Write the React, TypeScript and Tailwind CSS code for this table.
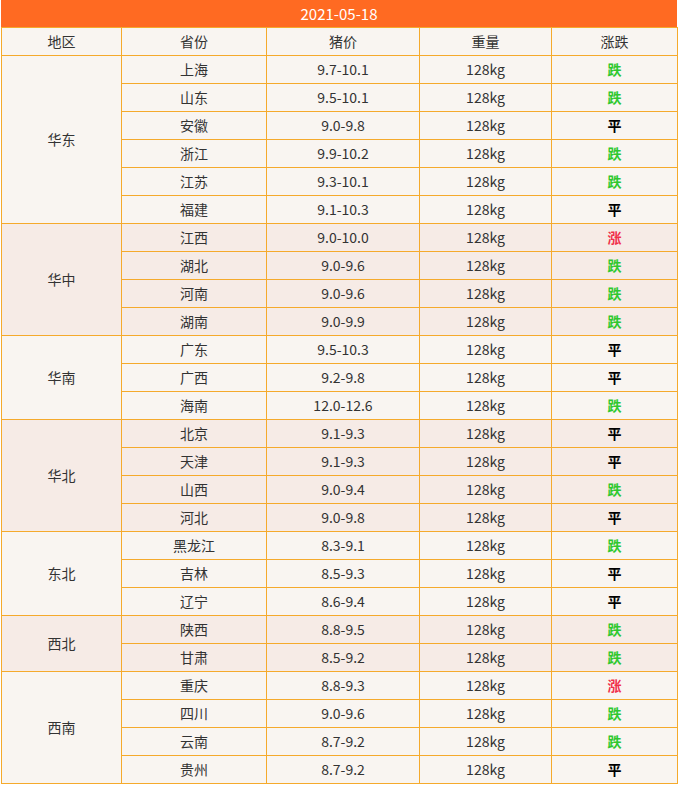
const groups = [
  {
    region: "华东",
    rows: [
      ["上海", "9.7-10.1", "跌"],
      ["山东", "9.5-10.1", "跌"],
      ["安徽", "9.0-9.8", "平"],
      ["浙江", "9.9-10.2", "跌"],
      ["江苏", "9.3-10.1", "跌"],
      ["福建", "9.1-10.3", "平"],
    ],
  },
  {
    region: "华中",
    rows: [
      ["江西", "9.0-10.0", "涨"],
      ["湖北", "9.0-9.6", "跌"],
      ["河南", "9.0-9.6", "跌"],
      ["湖南", "9.0-9.9", "跌"],
    ],
  },
  {
    region: "华南",
    rows: [
      ["广东", "9.5-10.3", "平"],
      ["广西", "9.2-9.8", "平"],
      ["海南", "12.0-12.6", "跌"],
    ],
  },
  {
    region: "华北",
    rows: [
      ["北京", "9.1-9.3", "平"],
      ["天津", "9.1-9.3", "平"],
      ["山西", "9.0-9.4", "跌"],
      ["河北", "9.0-9.8", "平"],
    ],
  },
  {
    region: "东北",
    rows: [
      ["黑龙江", "8.3-9.1", "跌"],
      ["吉林", "8.5-9.3", "平"],
      ["辽宁", "8.6-9.4", "平"],
    ],
  },
  {
    region: "西北",
    rows: [
      ["陕西", "8.8-9.5", "跌"],
      ["甘肃", "8.5-9.2", "跌"],
    ],
  },
  {
    region: "西南",
    rows: [
      ["重庆", "8.8-9.3", "涨"],
      ["四川", "9.0-9.6", "跌"],
      ["云南", "8.7-9.2", "跌"],
      ["贵州", "8.7-9.2", "平"],
    ],
  },
]

function Trend({ value }: { value: string }) {
  if (value === "涨") return <span className="font-bold text-[#f0304a]">涨</span>
  if (value === "跌") return <span className="font-bold text-[#2fc82f]">跌</span>
  return <span className="font-bold text-black">平</span>
}

const cell = "border border-[#f5aa2c] h-[28px] p-0 text-center align-middle"

export default function App() {
  return (
    <div className="w-[679px] h-[789px] bg-white font-['Microsoft_YaHei','Noto_Sans_CJK_SC',sans-serif] text-[14px] text-[#333]">
      <div className="ml-px w-[676px]">
        <div className="h-[27px] bg-[#ff6a22] text-white text-[15px] leading-[27px] text-center">2021-05-18</div>
        <table className="w-[676px] border-collapse table-fixed">
          <colgroup>
            <col className="w-[120px]" />
            <col className="w-[145px]" />
            <col className="w-[153px]" />
            <col className="w-[132px]" />
            <col className="w-[126px]" />
          </colgroup>
          <thead>
            <tr className="bg-[#f9f5f1]">
              <td className={cell}>地区</td>
              <td className={cell}>省份</td>
              <td className={cell}>猪价</td>
              <td className={cell}>重量</td>
              <td className={cell}>涨跌</td>
            </tr>
          </thead>
          <tbody>
            {groups.map((g, gi) =>
              g.rows.map((r, ri) => (
                <tr key={g.region + ri} className={gi % 2 === 0 ? "bg-[#f9f5f1]" : "bg-[#f6ebe6]"}>
                  {ri === 0 && (
                    <td className={cell} rowSpan={g.rows.length}>
                      {g.region}
                    </td>
                  )}
                  <td className={cell}>{r[0]}</td>
                  <td className={cell}>{r[1]}</td>
                  <td className={cell}>128kg</td>
                  <td className={cell}>
                    <Trend value={r[2]} />
                  </td>
                </tr>
              ))
            )}
          </tbody>
        </table>
      </div>
    </div>
  )
}
